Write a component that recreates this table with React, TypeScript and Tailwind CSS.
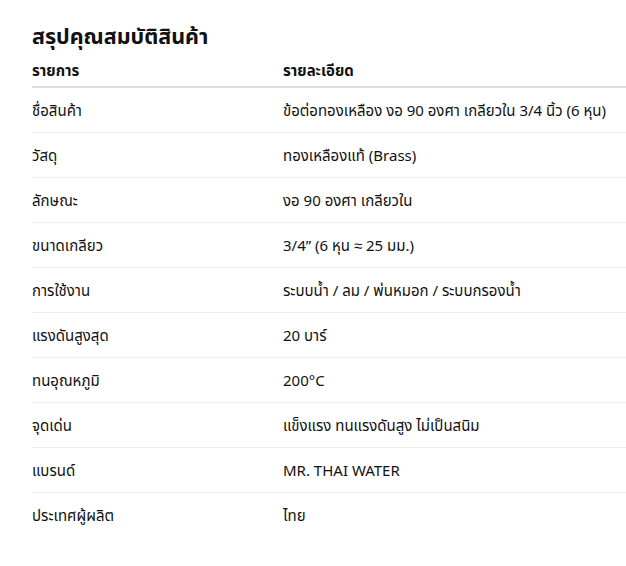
const specs = [
  ["ชื่อสินค้า", "ข้อต่อทองเหลือง งอ 90 องศา เกลียวใน 3/4 นิ้ว (6 หุน)"],
  ["วัสดุ", "ทองเหลืองแท้ (Brass)"],
  ["ลักษณะ", "งอ 90 องศา เกลียวใน"],
  ["ขนาดเกลียว", "3/4” (6 หุน ≈ 25 มม.)"],
  ["การใช้งาน", "ระบบน้ำ / ลม / พ่นหมอก / ระบบกรองน้ำ"],
  ["แรงดันสูงสุด", "20 บาร์"],
  ["ทนอุณหภูมิ", "200°C"],
  ["จุดเด่น", "แข็งแรง ทนแรงดันสูง ไม่เป็นสนิม"],
  ["แบรนด์", "MR. THAI WATER"],
  ["ประเทศผู้ผลิต", "ไทย"],
];

export default function App() {
  return (
    <div
      className="min-h-[566px] bg-white pl-8 pt-[22px] text-[#111]"
      style={{ fontFamily: '"Noto Sans", "Noto Sans Thai", Tahoma, sans-serif' }}
    >
      <h2 className="text-[21.5px] font-bold leading-7">สรุปคุณสมบัติสินค้า</h2>
      <table className="w-full border-collapse text-[15px]">
        <thead>
          <tr className="border-b-2 border-[#ddd]">
            <th className="w-[251px] pt-[10px] pb-[6px] leading-5 text-left font-bold">รายการ</th>
            <th className="pt-[10px] pb-[6px] leading-5 text-left font-bold">รายละเอียด</th>
          </tr>
        </thead>
        <tbody>
          {specs.map(([label, value], i) => (
            <tr key={label} className={i < specs.length - 1 ? "border-b border-[#eee]" : ""}>
              <td className="py-3 leading-5">{label}</td>
              <td className="py-3 leading-5">{value}</td>
            </tr>
          ))}
        </tbody>
      </table>
    </div>
  );
}
